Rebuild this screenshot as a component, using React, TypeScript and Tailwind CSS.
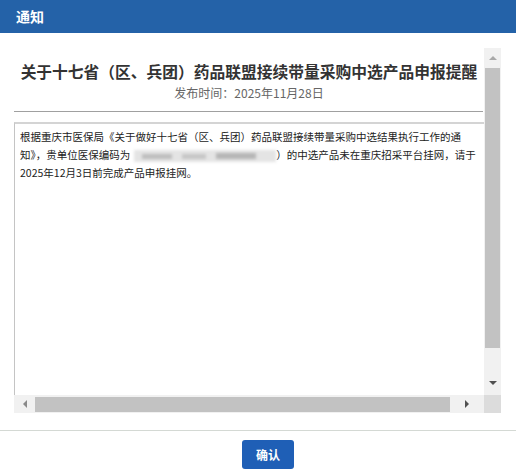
const font = { fontFamily: '"Noto Sans CJK SC", "Noto Sans", sans-serif' };

const ScrollV = () => (
  <div className="w-[17px] bg-[#f1f1f1] flex flex-col items-center">
    <div className="h-[20px] flex items-center justify-center">
      <div className="w-0 h-0 border-l-[4px] border-r-[4px] border-b-[4px] border-l-transparent border-r-transparent border-b-[#a8a8a8]" />
    </div>
    <div className="flex-1 w-[15px] bg-[#c2c2c2]" />
    <div className="h-[47px] flex items-end justify-center pb-[10px]">
      <div className="w-0 h-0 border-l-[4px] border-r-[4px] border-t-[4px] border-l-transparent border-r-transparent border-t-[#505050]" />
    </div>
  </div>
);

const ScrollH = () => (
  <div className="h-[18px] flex">
    <div className="flex-1 bg-[#f1f1f1] flex items-center">
      <div className="w-[21px] flex items-center justify-center">
        <div className="w-0 h-0 border-t-[4px] border-b-[4px] border-r-[4px] border-t-transparent border-b-transparent border-r-[#8a8a8a]" />
      </div>
      <div className="w-[415px] h-[15px] bg-[#c2c2c2]" />
      <div className="flex-1 flex items-center justify-center">
        <div className="w-0 h-0 border-t-[4px] border-b-[4px] border-l-[4px] border-t-transparent border-b-transparent border-l-[#505050]" />
      </div>
    </div>
    <div className="w-[17px] bg-[#dcdcdc]" />
  </div>
);

export default function App() {
  return (
    <div className="w-[516px] h-[476px] bg-white flex flex-col" style={font}>
      <div className="h-[33px] bg-[#2462a8] flex items-center px-[16px] text-white font-bold text-[14px]">
        通知
      </div>

      <div className="pt-[15px] pl-[14px] pr-[15px]">
        <div className="h-[365px] flex flex-col">
          <div className="flex flex-1 overflow-hidden">
            <div className="flex-1 flex flex-col overflow-hidden">
              <h1 className="pt-[12px] text-center text-[15.75px] leading-[24px] font-bold text-[#333] whitespace-nowrap">
                关于十七省（区、兵团）药品联盟接续带量采购中选产品申报提醒
              </h1>
              <p className="text-center text-[12px] leading-[18px] text-[#666]">发布时间：2025年11月28日</p>
              <div className="mt-[9px] mr-[1px] border-t border-[#a0a0a0]" />
              <div className="mt-[10px] flex-1 border-t-2 border-l border-t-[#d4d4d4] border-l-[#c4c4c4] pt-[4px] pl-[5px]">
                <p className="w-[462px] text-[10.5px] leading-[18px] text-[#222]">
                  根据重庆市医保局《关于做好十七省（区、兵团）药品联盟接续带量采购中选结果执行工作的通知》，贵单位医保编码为
                  <span className="inline-block align-middle ml-[4px] w-[142px] h-[12px] bg-[#e4e4e4] blur-[1.5px] overflow-hidden">
                    <span className="flex h-full items-center gap-[10px] px-[8px]">
                      <span className="w-[30px] h-[5px] bg-[#bdbdbd]" />
                      <span className="w-[24px] h-[5px] bg-[#c6c6c6]" />
                      <span className="w-[40px] h-[6px] bg-[#b5b5b5]" />
                    </span>
                  </span>
                  ）的中选产品未在重庆招采平台挂网，请于2025年12月3日前完成产品申报挂网。
                </p>
              </div>
            </div>
            <ScrollV />
          </div>
          <ScrollH />
        </div>
      </div>

      <div className="mt-[17px] border-t border-[#d4d9d4]" />
      <div className="flex justify-center pl-[20px] pt-[9px]">
        <button className="w-[52px] h-[29px] rounded-[3px] bg-[#1f5fb6] text-white text-[12px] font-bold">
          确认
        </button>
      </div>
    </div>
  );
}
